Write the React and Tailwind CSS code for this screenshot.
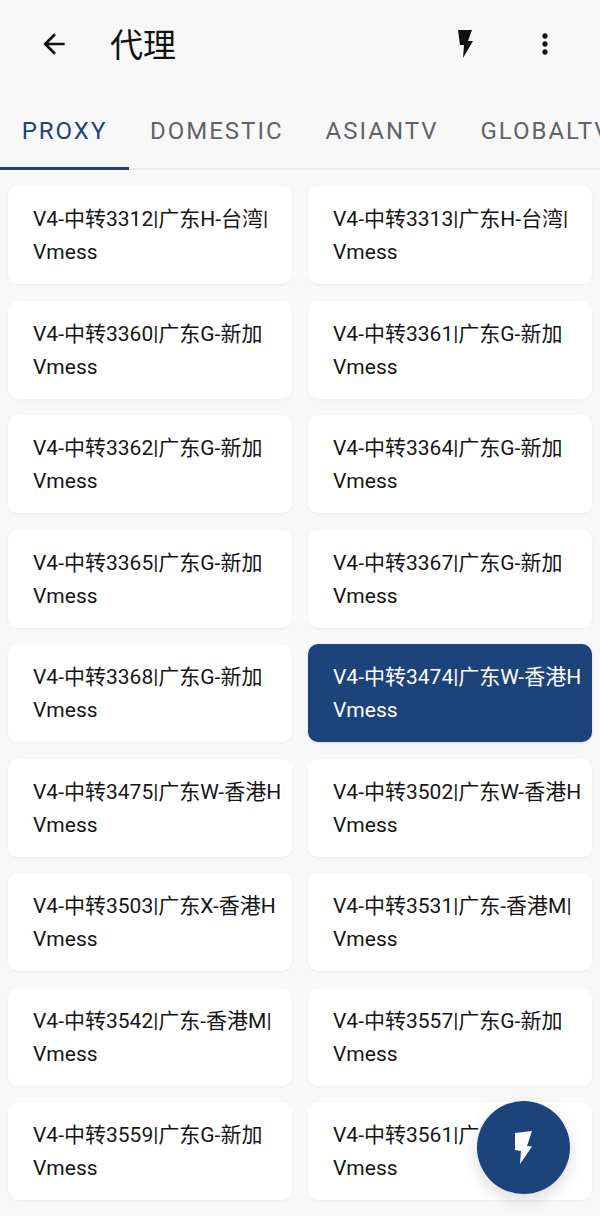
const proxies = [
  "V4-中转3312|广东H-台湾|",
  "V4-中转3313|广东H-台湾|",
  "V4-中转3360|广东G-新加",
  "V4-中转3361|广东G-新加",
  "V4-中转3362|广东G-新加",
  "V4-中转3364|广东G-新加",
  "V4-中转3365|广东G-新加",
  "V4-中转3367|广东G-新加",
  "V4-中转3368|广东G-新加",
  "V4-中转3474|广东W-香港H",
  "V4-中转3475|广东W-香港H",
  "V4-中转3502|广东W-香港H",
  "V4-中转3503|广东X-香港H",
  "V4-中转3531|广东-香港M|",
  "V4-中转3542|广东-香港M|",
  "V4-中转3557|广东G-新加",
  "V4-中转3559|广东G-新加",
  "V4-中转3561|广东G-新加",
];

const tabs = ["PROXY", "DOMESTIC", "ASIANTV", "GLOBALTV"];

function ProxyCard({ name, selected }) {
  return (
    <div
      className={
        selected
          ? "h-[98px] rounded-[10px] bg-[#1c437a] pl-[25px] pt-[17px] text-white shadow-sm overflow-hidden"
          : "h-[98px] rounded-[10px] bg-white pl-[25px] pt-[17px] text-[#151515] shadow-[0_1px_3px_rgba(0,0,0,0.05)] overflow-hidden"
      }
    >
      <p className="whitespace-nowrap text-[21px] leading-[33px]">{name}</p>
      <p className="text-[21px] leading-[33px]">Vmess</p>
    </div>
  );
}

export default function App() {
  return (
    <div className="relative h-[1216px] w-[600px] overflow-hidden bg-[#f8f8f8] font-['Roboto','Noto_Sans_CJK_SC',sans-serif]">
      {/* Toolbar */}
      <div className="flex h-[88px] items-center">
        <svg className="ml-[38px] h-[32px] w-[32px]" viewBox="0 0 24 24" fill="#111111">
          <path d="M20 11H7.83l5.59-5.59L12 4l-8 8 8 8 1.41-1.41L7.83 13H20v-2z" />
        </svg>
        <h1 className="ml-[40px] pt-[2px] text-[33px] leading-none text-[#111111]">代理</h1>
        <svg className="ml-auto h-[28px] w-[15px]" viewBox="0 0 15 28" fill="#111111">
          <path d="M0 0h14l-4 11h5L5 28l1-13H2z" />
        </svg>
        <svg className="ml-[56px] mr-[39px] h-[32px] w-[32px]" viewBox="0 0 24 24" fill="#111111">
          <path d="M12 8c1.1 0 2-.9 2-2s-.9-2-2-2-2 .9-2 2 .9 2 2 2zm0 2c-1.1 0-2 .9-2 2s.9 2 2 2 2-.9 2-2-.9-2-2-2zm0 6c-1.1 0-2 .9-2 2s.9 2 2 2 2-.9 2-2-.9-2-2-2z" />
        </svg>
      </div>

      {/* Tabs */}
      <div className="flex h-[82px] overflow-hidden shadow-[inset_0_-2px_0_#ececec]">
        {tabs.map((tab, i) => (
          <div
            key={tab}
            className={
              i === 0
                ? "relative flex h-[82px] w-[129px] shrink-0 items-center justify-center pt-[4px] text-[24px] tracking-[2px] text-[#1c437a]"
                : "flex h-[82px] shrink-0 items-center whitespace-nowrap pt-[4px] pl-[21px] pr-[21px] text-[24px] tracking-[2px] text-[#5f6368]"
            }
          >
            {tab}
            {i === 0 && <span className="absolute bottom-0 left-0 h-[3px] w-full bg-[#1c437a]" />}
          </div>
        ))}
      </div>

      {/* Proxy grid */}
      <div className="grid grid-cols-2 gap-x-[16px] gap-y-[16.5px] px-[8px] pt-[16px]">
        {proxies.map((name, i) => (
          <ProxyCard key={name} name={name} selected={i === 9} />
        ))}
      </div>

      {/* Floating button */}
      <button className="absolute left-[477px] top-[1101px] flex h-[93px] w-[93px] items-center justify-center rounded-full bg-[#1c437a] shadow-[0_6px_16px_rgba(0,0,0,0.15)]">
        <svg className="h-[33px] w-[17px]" viewBox="0 0 17 33" fill="#ffffff">
          <path d="M0 2 17 0 12 15l5 .5L5 33l1-13-6-1z" />
        </svg>
      </button>
    </div>
  );
}
